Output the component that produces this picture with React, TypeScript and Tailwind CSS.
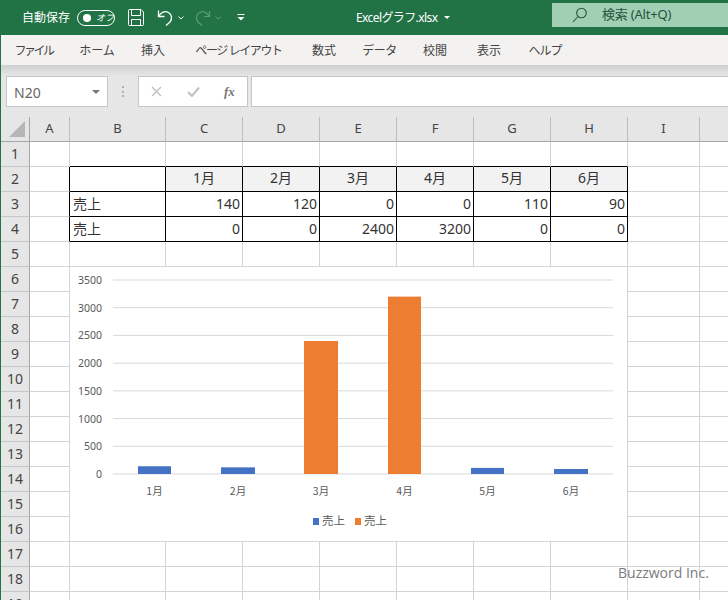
import React from 'react'

const sans = "font-['Noto_Sans','Noto_Sans_CJK_JP',sans-serif]"

const tabs = [
  { label: 'ファイル', w: 'w-[65px] tracking-[-2.5px]' },
  { label: 'ホーム', w: 'w-[62px]' },
  { label: '挿入', w: 'w-[50px]' },
  { label: 'ページ レイアウト', w: 'w-[121px] tracking-[-1.4px]' },
  { label: '数式', w: 'w-[50px]' },
  { label: 'データ', w: 'w-[61px] tracking-[-0.5px]' },
  { label: '校閲', w: 'w-[50px]' },
  { label: '表示', w: 'w-[58px]' },
  { label: 'ヘルプ', w: 'w-[54px] tracking-[-1px]' },
]

const columns = [
  { name: 'A', w: 'w-[40px]' },
  { name: 'B', w: 'w-[96px]' },
  { name: 'C', w: 'w-[77px]' },
  { name: 'D', w: 'w-[77px]' },
  { name: 'E', w: 'w-[77px]' },
  { name: 'F', w: 'w-[77px]' },
  { name: 'G', w: 'w-[77px]' },
  { name: 'H', w: 'w-[77px]' },
  { name: 'I', w: 'w-[72px]' },
  { name: '', w: 'w-[28px]' },
]

const rows = Array.from({ length: 19 }, (_, i) => i + 1)

const months = ['1月', '2月', '3月', '4月', '5月', '6月']
const row3 = [140, 120, 0, 0, 110, 90]
const row4 = [0, 0, 2400, 3200, 0, 0]

function cellClass(row: number, col: number) {
  // table block sits on B2:H4, its outer lines fall on the neighbours' borders
  const inTable = row >= 2 && row <= 4 && col >= 1 && col <= 7
  if (inTable) {
    const header = row === 2 && col >= 2
    return `border-r border-b border-black ${header ? 'bg-[#f2f2f2]' : 'bg-white'}`
  }
  if (row === 1 && col >= 1 && col <= 7) return 'border-r border-b border-r-[#d4d4d4] border-b-black bg-white'
  if (col === 0 && row >= 2 && row <= 4) return 'border-r border-b border-r-black border-b-[#d4d4d4] bg-white'
  return 'border-r border-b border-[#d4d4d4] bg-white'
}

function cellText(row: number, col: number) {
  if (row === 2 && col >= 2 && col <= 7) return <span className="w-full pb-[3px] text-center">{months[col - 2]}</span>
  if ((row === 3 || row === 4) && col === 1) return <span className="pb-[2px] pl-[3px]">売上</span>
  if (row === 3 && col >= 2 && col <= 7) return <span className="w-full pr-[2px] pb-[2px] text-right">{row3[col - 2]}</span>
  if (row === 4 && col >= 2 && col <= 7) return <span className="w-full pr-[2px] pb-[2px] text-right">{row4[col - 2]}</span>
  return null
}

const bars = [
  { x: 138, w: 33, value: 140, color: '#4472c4' },
  { x: 221, w: 34, value: 120, color: '#4472c4' },
  { x: 304, w: 34, value: 2400, color: '#ed7d31' },
  { x: 388, w: 33, value: 3200, color: '#ed7d31' },
  { x: 471, w: 33, value: 110, color: '#4472c4' },
  { x: 554, w: 34, value: 90, color: '#4472c4' },
]

const Chart = () => {
  const baseY = 474 - 267
  const scale = (474 - 280) / 3500
  return (
    <svg width="557" height="274" viewBox="0 0 557 274" className="block">
      {[0, 500, 1000, 1500, 2000, 2500, 3000, 3500].map((v) => (
        <g key={v}>
          <line x1="43" x2="543" y1={baseY - v * scale} y2={baseY - v * scale} stroke="#d9d9d9" strokeWidth="1" />
          <text x="32" y={baseY - v * scale + 4} textAnchor="end" fontSize="10.5" fill="#595959" fontFamily="Noto Sans">
            {v}
          </text>
        </g>
      ))}
      {bars.map((b, i) => (
        <g key={i}>
          <rect x={b.x - 70} y={baseY - b.value * scale} width={b.w} height={b.value * scale} fill={b.color} />
          <text
            x={b.x - 70 + b.w / 2}
            y="228"
            textAnchor="middle"
            fontSize="10.5"
            fill="#595959"
            fontFamily="Noto Sans CJK JP"
          >
            {months[i]}
          </text>
        </g>
      ))}
      <rect x="243" y="251" width="6" height="7" fill="#4472c4" />
      <text x="252" y="258" fontSize="11.5" fill="#595959" fontFamily="Noto Sans CJK JP">売上</text>
      <rect x="285" y="251" width="6" height="7" fill="#ed7d31" />
      <text x="294" y="258" fontSize="11.5" fill="#595959" fontFamily="Noto Sans CJK JP">売上</text>
    </svg>
  )
}

const App = () => {
  return (
    <div className={`relative h-[600px] w-[728px] overflow-hidden bg-white ${sans}`}>
      {/* title bar */}
      <div className="flex h-[35px] items-center bg-[#217346] text-white">
        <span className="ml-[22px] text-[12px]">自動保存</span>
        <div className="ml-[7px] flex h-[16px] w-[38px] items-center rounded-full border border-white">
          <div className="ml-[5px] h-[8px] w-[8px] rounded-full bg-white" />
          <span className="ml-[5px] text-[9px] leading-none italic">オフ</span>
        </div>
        <svg width="16" height="17" viewBox="0 0 16 17" className="ml-[13px]" fill="none" stroke="white" strokeWidth="1">
          <path d="M1.5 0.5H13L15.5 3V15.5Q15.5 16.5 14.5 16.5H1.5Q0.5 16.5 0.5 15.5V1.5Q0.5 0.5 1.5 0.5Z" />
          <path d="M3.5 0.5V6.5H12.5V0.5M3.5 16.5V10.5H12.5V16.5" />
        </svg>
        <svg width="17" height="17" viewBox="0 0 17 17" className="ml-[13px]" fill="none" stroke="white" strokeWidth="1.3">
          <path d="M1.5 1.5V7.5H7.5" />
          <path d="M2 7C4 3.5 8 1.5 11.5 3.5C15 5.5 15.5 10 13 13L9 16.5" />
        </svg>
        <svg width="6" height="4" viewBox="0 0 6 4" className="ml-[4px]" fill="none" stroke="white" strokeWidth="1">
          <path d="M0.5 0.5L3 3L5.5 0.5" />
        </svg>
        <svg width="17" height="17" viewBox="0 0 17 17" className="ml-[10px]" fill="none" stroke="#5a9a78" strokeWidth="1.2">
          <path d="M15.5 2V7.5H10" />
          <path d="M15 7C13 3.5 9 1.5 5.5 3.5C2 5.5 1.5 10 4 13L8 16.5" />
        </svg>
        <svg width="6" height="4" viewBox="0 0 6 4" className="ml-[4px]" fill="none" stroke="#5a9a78" strokeWidth="1">
          <path d="M0.5 0.5L3 3L5.5 0.5" />
        </svg>
        <svg width="8" height="7" viewBox="0 0 8 7" className="ml-[16px]" fill="white">
          <rect x="0.5" y="0" width="7" height="1" />
          <path d="M0.5 3H7.5L4 6.5Z" />
        </svg>
        <span className="ml-[111px] pt-[1px] text-[12px] tracking-[-0.6px]">Excelグラフ.xlsx</span>
        <svg width="6" height="3" viewBox="0 0 6 3" className="ml-[7px]" fill="white">
          <path d="M0 0H6L3 3Z" />
        </svg>
        <div className="mb-[5px] ml-auto flex h-[24px] w-[176px] items-center bg-[#a0cfb4] text-[#24533b]">
          <svg width="16" height="16" viewBox="0 0 16 16" className="ml-[20px]" fill="none" stroke="#24533b" strokeWidth="1.1">
            <circle cx="9.5" cy="6" r="4.8" />
            <path d="M6 9.5L1 15" />
          </svg>
          <span className="ml-[14px] text-[13px] tracking-[-0.2px]">検索 (Alt+Q)</span>
        </div>
      </div>

      <div className="border-l border-[#217346]">
        {/* ribbon tabs */}
        <div className="flex h-[30px] items-center bg-[#f3f2f1] pt-[2px] text-[12px] text-[#444444]">
          {tabs.map((t, i) => (
            <span key={i} className={`${t.w} text-center`}>
              {t.label}
            </span>
          ))}
        </div>

        {/* formula bar */}
        <div className="h-[52px] bg-[#e6e6e6]">
          <div className="h-[11px] bg-gradient-to-b from-[#cfcfcf] to-[#e6e6e6]" />
          <div className="flex h-[31px] items-start pl-[5px]">
            <div className="flex h-[31px] w-[102px] items-center justify-between border border-[#c6c6c6] bg-white pr-[7px] pl-[7px] text-[14px] text-[#666666]">
              <span className="pt-[2px]">N20</span>
              <svg width="8" height="4" viewBox="0 0 8 4" fill="#777777">
                <path d="M0 0H8L4 4Z" />
              </svg>
            </div>
            <div className="flex h-[31px] w-[30px] items-center justify-center">
              <div className="h-[11px] w-[2px] border-y-0 border-l-2 border-dotted border-[#b0b0b0]" />
            </div>
            <div className="flex h-[31px] w-[110px] items-center border border-[#c6c6c6] bg-white">
              <svg width="11" height="11" viewBox="0 0 11 11" className="ml-[12px]" stroke="#c0c0c0" strokeWidth="1.4">
                <path d="M1 1L10 10M10 1L1 10" />
              </svg>
              <svg width="13" height="11" viewBox="0 0 13 11" className="ml-[25px]" fill="none" stroke="#c0c0c0" strokeWidth="2">
                <path d="M1 6L5 10L12 1.5" />
              </svg>
              <span className="ml-[24px] font-['Liberation_Serif',serif] text-[13px] font-bold text-[#777777] italic">fx</span>
            </div>
            <div className="ml-[3px] h-[31px] flex-1 border border-r-0 border-[#c6c6c6] bg-white" />
          </div>
        </div>

        {/* sheet */}
        <div className="relative">
          {/* column headers */}
          <div className="flex h-[25px] bg-[#e6e6e6] text-[13px] text-[#444444]">
            <div className="relative w-[29px] border-r border-b border-[#a6a6a6]">
              <svg width="18" height="18" viewBox="0 0 18 18" className="absolute right-[3px] bottom-[3px]" fill="#b6b6b6">
                <path d="M17 1V17H1Z" />
              </svg>
            </div>
            {columns.map((c) => (
              <div
                key={c.name}
                className={`${c.w} flex items-center justify-center border-r border-b border-r-[#bdbdbd] border-b-[#a6a6a6] last:border-r-0`}
              >
                {c.name}
              </div>
            ))}
          </div>

          {rows.map((r) => (
            <div key={r} className="flex h-[25px]">
              <div className="flex w-[29px] items-center justify-center border-r border-b border-r-[#a6a6a6] border-b-[#c6c6c6] bg-[#e6e6e6] pb-[2px] text-[14px] text-[#444444]">
                {r}
              </div>
              {columns.map((c, i) => (
                <div key={c.name} className={`${c.w} ${cellClass(r, i)} flex items-center text-[14px] text-[#333333] last:border-r-0`}>
                  {cellText(r, i)}
                </div>
              ))}
            </div>
          ))}

          {/* chart floats on the sheet */}
          <div className="absolute top-[150px] left-[69px] bg-white">
            <Chart />
          </div>
        </div>
      </div>

      <div className="absolute top-[563px] left-[618px] font-['Open_Sans',sans-serif] text-[14px] leading-[20px] text-[#7b7b7b]">
        Buzzword Inc.
      </div>
    </div>
  )
}

export default App
